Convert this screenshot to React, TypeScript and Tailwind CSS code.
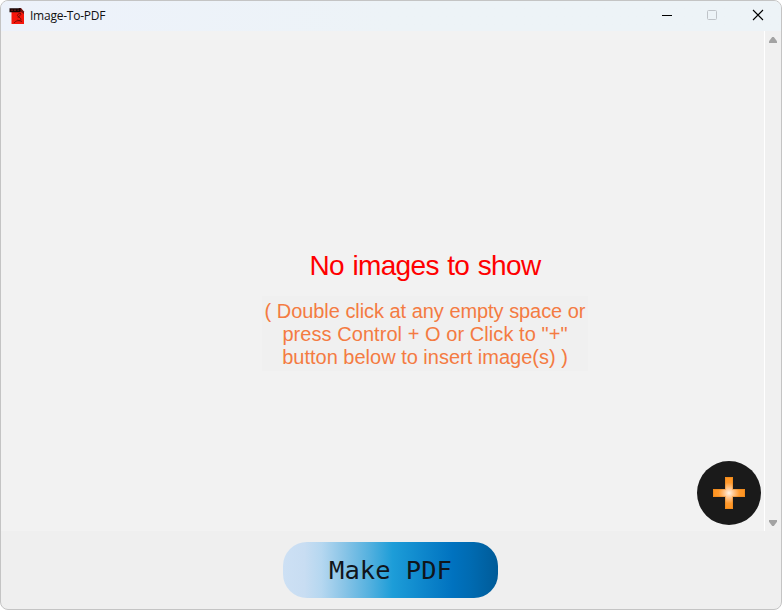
function PdfIcon() {
  return (
    <svg width="16" height="18" viewBox="0 0 16 18">
      <path d="M3 2h8L15 5v12H2.500V5z" fill="#f5160c" />
      <path d="M9.500 1h2.500L15 4.500V7l-3.500-2.500z" fill="#761310" />
      <path d="M0.500 1.200h11v4H0.500z" fill="#170504" />
      <path d="M2 3.200h2M5 3.200h2M8.500 3.200h1.500" stroke="#7d1c17" fill="none" />
      <path d="M12 6.500C9 6.500 7.500 8 9 9.500l2.500 1.800c1.500 1.500-.8 3-3 1.700M5 16c2-2.500 4.500-3 8-1.500M9 10.500l3.300-3.500" stroke="#650b08" strokeWidth="0.900" fill="none" />
    </svg>
  );
}

function TitleBar() {
  return (
    <header className="flex h-[30px] shrink-0 items-center bg-linear-to-r from-[#edf2fb] to-[#edf3f7] to-50%">
      <div className="ml-2 flex w-[21px] items-center">
        <PdfIcon />
      </div>
      <h1 className="flex-1 font-['Open_Sans','Noto_Sans',sans-serif] text-[12px] leading-4 tracking-[-0.24px] text-[#111]">
        Image-To-PDF
      </h1>
      <div className="flex h-full items-center pb-[2px] text-black">
        <button aria-label="Minimize" className="flex w-[45px] justify-center">
          <svg width="12" height="12" viewBox="0 0 12 12"><path d="M1 6.500h10" stroke="currentColor" /></svg>
        </button>
        <button aria-label="Maximize" disabled className="flex w-[45px] justify-center text-[#bfc3c8]">
          <svg width="12" height="12" viewBox="0 0 12 12"><rect x="1.500" y="1.500" width="9" height="9" rx="1" fill="none" stroke="currentColor" /></svg>
        </button>
        <button aria-label="Close" className="flex w-[47px] justify-center">
          <svg width="12" height="12" viewBox="0 0 12 12"><path d="M1 1l10 10M11 1L1 11" stroke="currentColor" strokeWidth="1.100" /></svg>
        </button>
      </div>
    </header>
  );
}

function ScrollBar() {
  return (
    <div className="flex w-4 shrink-0 flex-col items-center justify-between bg-[#f0f0f0] pt-[6px] pb-[5px]">
      <svg width="8" height="6" viewBox="0 0 8 6"><path d="M3.200 0h1.600L8 4.300V6H0V4.300z" fill="#a3a3a3" /></svg>
      <svg width="8" height="6" viewBox="0 0 8 6"><path d="M0 0h8v1.700L4.800 6H3.200L0 1.700z" fill="#a3a3a3" /></svg>
    </div>
  );
}

function AddButton() {
  return (
    <button aria-label="Add images" className="absolute top-[430px] left-[696px] size-16 rounded-full bg-[#1a1a1a]">
      <svg width="64" height="64" viewBox="0 0 64 64">
        <defs>
          <radialGradient id="glow" gradientUnits="userSpaceOnUse" cx="32" cy="32" r="16">
            <stop offset="0" stopColor="#fff4e8" />
            <stop offset="0.300" stopColor="#ffc58c" />
            <stop offset="0.650" stopColor="#ff9a2e" />
            <stop offset="1" stopColor="#ff931e" />
          </radialGradient>
        </defs>
        <path d="M28 16h8v12h12v8h-12v12h-8v-12h-12v-8h12z" fill="url(#glow)" />
        <path d="M28.500 16.500h7v12h12v7h-12v12h-7v-12h-12v-7h12z" fill="none" stroke="#d87d1c" strokeWidth="0.400" />
      </svg>
    </button>
  );
}

export default function App() {
  return (
    <div className="h-[610px] w-[782px] bg-white">
      <main className="flex h-full flex-col overflow-hidden rounded-[8px] border border-[#c4c4c4] bg-[#efefef]">
        <TitleBar />
        <div className="flex h-[500px] shrink-0">
          <section className="relative flex w-[763px] shrink-0 flex-col items-center bg-[#f2f2f2] pt-[219px] font-['Liberation_Sans',Arial,sans-serif]">
            <h2 className="ml-[85px] text-[28px] leading-8 tracking-[-0.65px] [word-spacing:1.3px] whitespace-nowrap text-[#ff0000]">No images to show</h2>
            <p className="mt-[14px] ml-[85px] flex h-[75px] w-[326px] flex-col items-center bg-[#f0f0f0] pt-[4px] text-[20px] leading-[23px] whitespace-nowrap text-[#f47b42]">
              <span className="tracking-[-0.08px] [word-spacing:0.2px]">( Double click at any empty space or</span>
              <span className="tracking-[0.06px]">press Control + O or Click to "+"</span>
              <span>button below to insert image(s) )</span>
            </p>
            <AddButton />
          </section>
          <div className="w-px shrink-0 bg-white" />
          <ScrollBar />
        </div>
        <footer className="flex flex-1 items-start justify-center pt-[11px] pr-px">
          <button className="h-14 w-[215px] rounded-[24px] bg-[linear-gradient(90deg,#cde0f4_0%,#c8ddf2_10%,#b5d7f0_18%,#8bc5e7_28%,#55b1df_40%,#1d9dd8_51%,#0e87cc_65%,#0072bf_79%,#006bb2_87%,#005b98_100%)] pt-px font-['DejaVu_Sans_Mono',monospace] text-[25.500px] leading-[55px] text-[#10151b]">
            Make PDF
          </button>
        </footer>
      </main>
    </div>
  );
}
